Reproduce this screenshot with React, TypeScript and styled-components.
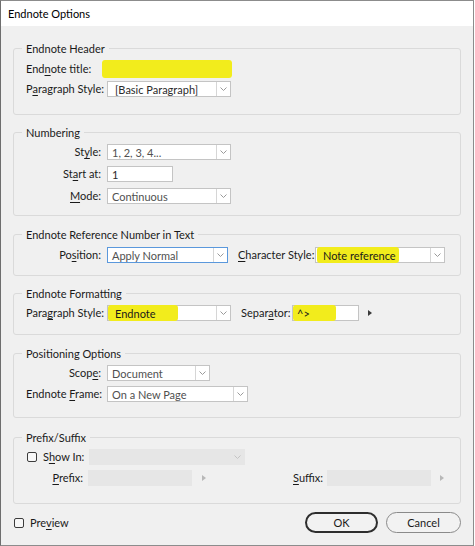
import React from 'react';
import styled, { createGlobalStyle } from 'styled-components';

const FONT = `Lato, "Noto Sans", "Liberation Sans", sans-serif`;

const GlobalStyle = createGlobalStyle`
  html, body {
    margin: 0;
    padding: 0;
    background: #ffffff;
  }
  body {
    font-family: ${FONT};
    color: #1a1a1a;
  }
  * {
    box-sizing: border-box;
  }
`;

const Window = styled.div`
  width: 474px;
  height: 546px;
  border: 1px solid #8c8c8c;
  border-left-color: #6e6e6e;
  background: #f0f0f0;
  display: flex;
  flex-direction: column;
  overflow: hidden;
`;

const TitleBar = styled.div`
  height: 25px;
  flex: none;
  background: #ffffff;
  display: flex;
  align-items: center;
  padding-left: 7px;
  font-size: 11px;
  color: #000;
`;

const Body = styled.div`
  padding: 22px 12px 0 12px;
  display: flex;
  flex-direction: column;
`;

const Group = styled.div<{ $mt: number; $pb: number }>`
  margin-top: ${(p) => p.$mt}px;
  border: 1px solid #dadada;
  border-radius: 3px;
  padding: 0 12px ${(p) => p.$pb}px 12px;
`;

const Legend = styled.div`
  width: fit-content;
  height: 15px;
  margin: -8px 0 0 -4px;
  padding: 0 4px;
  background: #f0f0f0;
  font-size: 11px;
  line-height: 15px;
  color: #1a1a1a;
`;

const Rows = styled.div<{ $mt: number; $gap: number }>`
  margin-top: ${(p) => p.$mt}px;
  display: flex;
  flex-direction: column;
  gap: ${(p) => p.$gap}px;
`;

const Row = styled.div`
  display: flex;
  align-items: center;
  height: 16px;
`;

const Label = styled.div<{ $w?: number; $right?: boolean; $ml?: number; $mr?: number }>`
  width: ${(p) => (p.$w ? `${p.$w}px` : 'auto')};
  margin-left: ${(p) => p.$ml ?? 0}px;
  margin-right: ${(p) => p.$mr ?? 6}px;
  text-align: ${(p) => (p.$right ? 'right' : 'left')};
  font-size: 11px;
  line-height: 16px;
  white-space: nowrap;
  flex: none;
  color: #1a1a1a;
`;

const U = styled.span`
  text-decoration: underline;
  text-underline-offset: 2px;
`;

const Box = styled.div<{ $w: number; $focus?: boolean; $disabled?: boolean; $bare?: boolean }>`
  width: ${(p) => p.$w}px;
  height: 16px;
  flex: none;
  display: flex;
  align-items: stretch;
  background: ${(p) => (p.$disabled ? '#e6e6e6' : '#ffffff')};
  border: ${(p) =>
    p.$bare
      ? 'none'
      : `1px solid ${p.$focus ? '#5a98dc' : p.$disabled ? '#e6e6e6' : '#c4c4c4'}`};
  font-size: 11px;
  color: #505050;
`;

const Value = styled.div<{ $pl?: number; $dark?: boolean }>`
  flex: 1;
  display: flex;
  align-items: center;
  padding-left: ${(p) => p.$pl ?? 4}px;
  white-space: nowrap;
  overflow: hidden;
  color: ${(p) => (p.$dark ? '#2a2a2a' : '#505050')};
`;

const Highlight = styled.span<{ $w: number; $pl?: number; $ml?: number }>`
  display: flex;
  align-items: center;
  flex: none;
  width: ${(p) => p.$w}px;
  margin: -1px 0 -1px ${(p) => p.$ml ?? 0}px;
  padding-left: ${(p) => p.$pl ?? 6}px;
  background: #f2ec1c;
  border-radius: 3px;
  white-space: nowrap;
  color: #1a1a1a;
`;

const ChevronCell = styled.div<{ $disabled?: boolean }>`
  width: 14px;
  flex: none;
  margin-left: auto;
  display: flex;
  align-items: center;
  justify-content: center;
  border-left: 1px solid ${(p) => (p.$disabled ? 'transparent' : '#d6d6d6')};
`;

const Chevron = ({ light }: { light?: boolean }) => (
  <svg width="7" height="4" viewBox="0 0 7 4">
    <polyline
      points="0.5,0.5 3.5,3.5 6.5,0.5"
      fill="none"
      stroke={light ? '#c4c4c4' : '#9a9a9a'}
      strokeWidth="1"
    />
  </svg>
);

const Arrow = styled.span<{ $ml: number; $disabled?: boolean }>`
  margin-left: ${(p) => p.$ml}px;
  width: 0;
  height: 0;
  border-top: 3.5px solid transparent;
  border-bottom: 3.5px solid transparent;
  border-left: 4px solid ${(p) => (p.$disabled ? '#b8b8b8' : '#3a3a3a')};
  flex: none;
`;

const Check = styled.span<{ $ml?: number }>`
  width: 10px;
  height: 10px;
  margin-left: ${(p) => p.$ml ?? 0}px;
  margin-right: 6px;
  border: 1px solid #3c3c3c;
  border-radius: 2px;
  background: #f7f7f7;
  flex: none;
`;

const Footer = styled.div`
  margin-top: 8px;
  display: flex;
  align-items: center;
  height: 21px;
  padding-left: 1px;
`;

const PreviewLabel = styled.span`
  font-size: 11px;
  color: #1a1a1a;
`;

const Spacer = styled.div`
  flex: 1;
`;

const Button = styled.button<{ $primary?: boolean; $w: number }>`
  width: ${(p) => p.$w}px;
  height: 21px;
  margin-left: ${(p) => (p.$primary ? 0 : 8)}px;
  border-radius: 11px;
  border: ${(p) => (p.$primary ? '2px solid #2e2e2e' : '1px solid #8a8a8a')};
  background: #f2f2f2;
  font-family: ${FONT};
  font-size: 11px;
  color: #1a1a1a;
  padding: 0;
`;

const Select: React.FC<{
  w: number;
  focus?: boolean;
  disabled?: boolean;
  children?: React.ReactNode;
}> = ({ w, focus, disabled, children }) => (
  <Box $w={w} $focus={focus} $disabled={disabled}>
    {children}
    <ChevronCell $disabled={disabled}>
      <Chevron light={disabled} />
    </ChevronCell>
  </Box>
);

export default function App() {
  return (
    <>
      <GlobalStyle />
      <Window>
        <TitleBar>Endnote Options</TitleBar>
        <Body>
          <Group $mt={0} $pb={17}>
            <Legend>Endnote Header</Legend>
            <Rows $mt={5} $gap={4}>
              <Row>
                <Label $w={70}>
                  End<U>n</U>ote title:
                </Label>
                <Box $w={130} $bare>
                  <Highlight $w={130} />
                </Box>
              </Row>
              <Row>
                <Label $w={75}>
                  P<U>a</U>ragraph Style:
                </Label>
                <Select w={124}>
                  <Value $pl={7} $dark>
                    [Basic Paragraph]
                  </Value>
                </Select>
              </Row>
            </Rows>
          </Group>

          <Group $mt={17} $pb={11}>
            <Legend>Numbering</Legend>
            <Rows $mt={4} $gap={6}>
              <Row>
                <Label $w={75} $right>
                  St<U>y</U>le:
                </Label>
                <Select w={124}>
                  <Value>1, 2, 3, 4...</Value>
                </Select>
              </Row>
              <Row>
                <Label $w={75} $right>
                  St<U>a</U>rt at:
                </Label>
                <Box $w={66}>
                  <Value $dark>1</Value>
                </Box>
              </Row>
              <Row>
                <Label $w={75} $right>
                  <U>M</U>ode:
                </Label>
                <Select w={124}>
                  <Value>Continuous</Value>
                </Select>
              </Row>
            </Rows>
          </Group>

          <Group $mt={18} $pb={12}>
            <Legend>Endnote Reference Number in Text</Legend>
            <Rows $mt={5} $gap={0}>
              <Row>
                <Label $w={75} $right>
                  Po<U>s</U>ition:
                </Label>
                <Select w={121} focus>
                  <Value>Apply Normal</Value>
                </Select>
                <Label $ml={10} $w={72} $mr={5}>
                  <U>C</U>haracter Style:
                </Label>
                <Select w={130}>
                  <Highlight $w={82} $pl={6} $ml={1}>
                    Note reference
                  </Highlight>
                </Select>
              </Row>
            </Rows>
          </Group>

          <Group $mt={17} $pb={13}>
            <Legend>Endnote Formatting</Legend>
            <Rows $mt={4} $gap={0}>
              <Row>
                <Label $w={75}>
                  Para<U>g</U>raph Style:
                </Label>
                <Select w={124}>
                  <Highlight $w={70} $pl={7}>
                    Endnote
                  </Highlight>
                </Select>
                <Label $ml={10} $w={46} $mr={5}>
                  Separ<U>a</U>tor:
                </Label>
                <Box $w={67}>
                  <Highlight $w={43} $pl={4}>
                    ^&gt;
                  </Highlight>
                </Box>
                <Arrow $ml={9} />
              </Row>
            </Rows>
          </Group>

          <Group $mt={18} $pb={15}>
            <Legend>Positioning Options</Legend>
            <Rows $mt={4} $gap={5}>
              <Row>
                <Label $w={75} $right>
                  Scop<U>e</U>:
                </Label>
                <Select w={103}>
                  <Value>Document</Value>
                </Select>
              </Row>
              <Row>
                <Label $w={75} $right>
                  Endnote <U>F</U>rame:
                </Label>
                <Select w={141}>
                  <Value>On a New Page</Value>
                </Select>
              </Row>
            </Rows>
          </Group>

          <Group $mt={19} $pb={17}>
            <Legend>Prefix/Suffix</Legend>
            <Rows $mt={4} $gap={5}>
              <Row>
                <Check $ml={1} />
                <Label $w={41} $mr={5}>
                  S<U>h</U>ow In:
                </Label>
                <Select w={156} disabled />
              </Row>
              <Row>
                <Label $w={57} $right $mr={5}>
                  <U>P</U>refix:
                </Label>
                <Box $w={104} $disabled />
                <Arrow $ml={10} $disabled />
                <Label $w={117} $right $mr={4}>
                  <U>S</U>uffix:
                </Label>
                <Box $w={104} $disabled />
                <Arrow $ml={9} $disabled />
              </Row>
            </Rows>
          </Group>

          <Footer>
            <Check />
            <PreviewLabel>
              Pre<U>v</U>iew
            </PreviewLabel>
            <Spacer />
            <Button $primary $w={73}>
              OK
            </Button>
            <Button $w={75}>Cancel</Button>
          </Footer>
        </Body>
      </Window>
    </>
  );
}
